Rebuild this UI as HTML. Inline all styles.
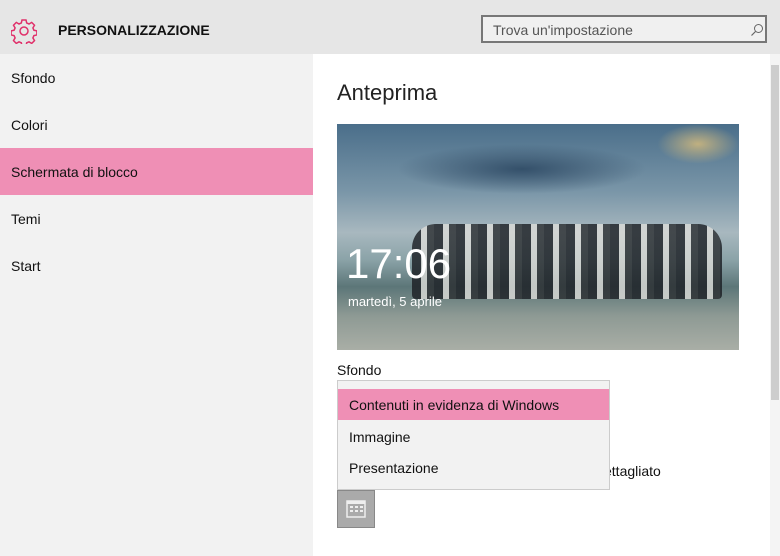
<!DOCTYPE html><html><head><style>
body{margin:0;width:780px;height:556px;overflow:hidden;font-family:"Liberation Sans",sans-serif;background:#fff;position:relative}
.a{position:absolute}
</style></head><body>
<div class="a" style="left:0;top:0;width:780px;height:54px;background:#e6e6e6"></div>
<svg class="a" style="left:11px;top:18px" width="26" height="26" viewBox="0 0 26 26"><g fill="none" stroke="#e0306a" stroke-width="1.5"><path d="M11 2h4l.7 3 2.3 1 2.7-1.6 2.8 2.8-1.6 2.7 1 2.3 3 .7v4l-3 .7-1 2.3 1.6 2.7-2.8 2.8-2.7-1.6-2.3 1-.7 3h-4l-.7-3-2.3-1-2.7 1.6-2.8-2.8 1.6-2.7-1-2.3-3-.7v-4l3-.7 1-2.3-1.6-2.7 2.8-2.8 2.7 1.6 2.3-1z"/><circle cx="13" cy="13" r="4"/></g></svg>
<div class="a" style="left:58px;top:22px;font-size:14px;font-weight:bold;color:#111">PERSONALIZZAZIONE</div>
<div class="a" style="left:481px;top:15px;width:286px;height:28px;border:2px solid #777;background:#f0f0f0;box-sizing:border-box"></div>
<div class="a" style="left:493px;top:22px;font-size:14px;color:#555">Trova un'impostazione</div>
<svg class="a" style="left:750px;top:23px" width="14" height="14"><circle cx="8.5" cy="5.5" r="4" fill="none" stroke="#666"/><path d="M5.5 8.5L1.5 12.5" stroke="#666" stroke-width="1.2"/></svg>
<div class="a" style="left:0;top:54px;width:313px;height:502px;background:#f2f2f2"></div>
<div class="a" style="left:0;top:148px;width:313px;height:47px;background:#ef8fb5"></div>
<div class="a" style="left:11px;top:70px;font-size:14px;color:#111;line-height:16px">Sfondo</div>
<div class="a" style="left:11px;top:117px;font-size:14px;color:#111;line-height:16px">Colori</div>
<div class="a" style="left:11px;top:164px;font-size:14px;color:#111;line-height:16px">Schermata di blocco</div>
<div class="a" style="left:11px;top:211px;font-size:14px;color:#111;line-height:16px">Temi</div>
<div class="a" style="left:11px;top:258px;font-size:14px;color:#111;line-height:16px">Start</div>
<div class="a" style="left:770px;top:54px;width:10px;height:502px;background:#f4f4f4"></div>
<div class="a" style="left:771px;top:65px;width:8px;height:335px;background:#cdcdcd"></div>
<div class="a" style="left:337px;top:80px;font-size:22px;color:#222">Anteprima</div>
<div class="a" style="left:337px;top:124px;width:402px;height:226px;overflow:hidden;background:linear-gradient(#4a6e8a 0%,#7a96a8 30%,#a8b8bf 48%,#8ba3a8 60%,#5c7678 72%,#8e9a94 85%,#a9aea6 100%)">
<div class="a" style="left:320px;top:0;width:82px;height:40px;background:radial-gradient(#c0b080,transparent 70%)"></div>
<div class="a" style="left:60px;top:20px;width:250px;height:50px;background:radial-gradient(#34506a,transparent 70%)"></div>
<div class="a" style="left:75px;top:100px;width:310px;height:75px;background:repeating-linear-gradient(90deg,#1a1d22 0 9px,#dcdcd8 9px 15px,#2a2d30 15px 22px);opacity:.8;border-radius:24px 24px 4px 4px"></div>
<div class="a" style="left:9px;top:116px;font-size:42px;color:#fff;font-weight:300">17:06</div>
<div class="a" style="left:11px;top:170px;font-size:13px;color:#fff">martedì, 5 aprile</div>
</div>
<div class="a" style="left:337px;top:362px;font-size:14px;color:#111">Sfondo</div>
<div class="a" style="left:604px;top:463px;font-size:14px;color:#111">ettagliato</div>
<div class="a" style="left:337px;top:490px;width:38px;height:38px;background:#aaa;border:1px solid #888;box-sizing:border-box"></div>
<svg class="a" style="left:345px;top:497px" width="22" height="22"><rect x="2" y="4" width="18" height="16" fill="none" stroke="#eee" stroke-width="1.5"/><rect x="2" y="4" width="18" height="3" fill="#eee"/><g fill="#eee"><rect x="5" y="9" width="3" height="2"/><rect x="10" y="9" width="3" height="2"/><rect x="15" y="9" width="3" height="2"/><rect x="5" y="13" width="3" height="2"/><rect x="10" y="13" width="3" height="2"/><rect x="15" y="13" width="3" height="2"/></g></svg>
<div class="a" style="left:337px;top:380px;width:273px;height:110px;background:#f2f2f2;border:1px solid #ccc;box-sizing:border-box"></div>
<div class="a" style="left:338px;top:389px;width:271px;height:31px;background:#ef8fb5"></div>
<div class="a" style="left:349px;top:397px;font-size:14px;color:#111">Contenuti in evidenza di Windows</div>
<div class="a" style="left:349px;top:429px;font-size:14px;color:#111">Immagine</div>
<div class="a" style="left:349px;top:460px;font-size:14px;color:#111">Presentazione</div>
</body></html>
